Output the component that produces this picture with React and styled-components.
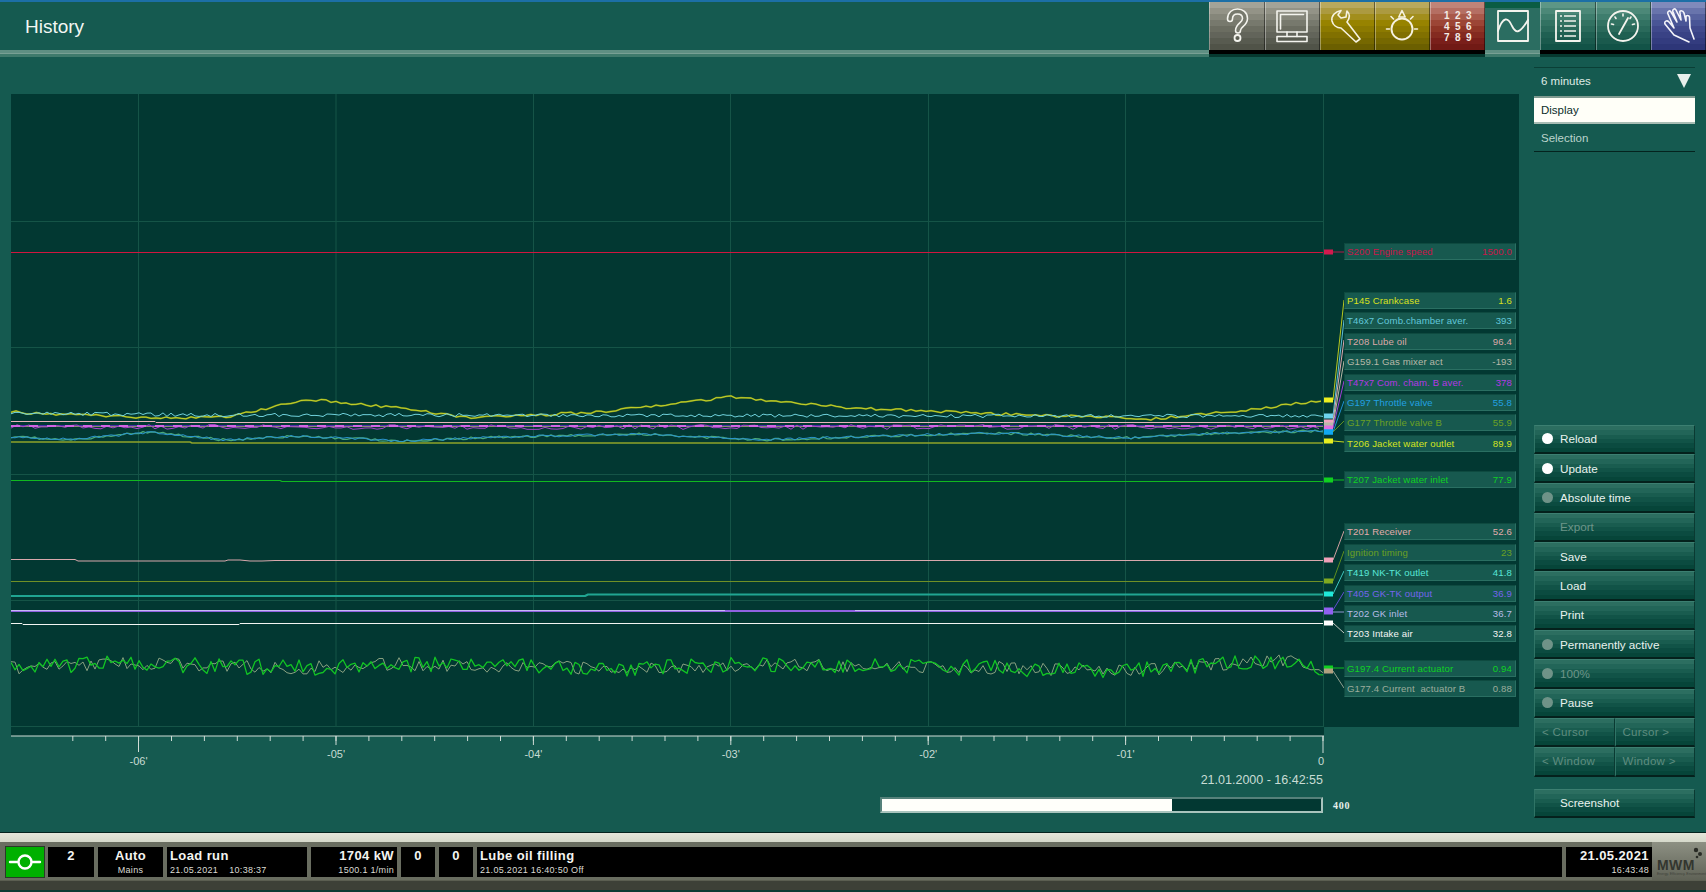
import React from "react";
import styled, { createGlobalStyle, css } from "styled-components";

const Global = createGlobalStyle`
  html, body { margin: 0; padding: 0; background: #155a50; overflow: hidden; }
  body { font-family: "Liberation Sans", Arial, sans-serif; }
`;

const bands = (cols) => {
  const n = cols.length;
  return `linear-gradient(to bottom, ${cols
    .map((c, i) => `${c} ${(i * 100) / n}% ${((i + 1) * 100) / n}%`)
    .join(", ")})`;
};

const tones = {
  gray: ["#a3a398", "#939387", "#85867a", "#77796d", "#6b6d61", "#62645a", "#585b50", "#505348"],
  yellow: ["#b9a95d", "#ac9a40", "#a28e1c", "#978300", "#8c7a00", "#817000", "#766800", "#6b5f00"],
  red: ["#c08478", "#b56f63", "#a8594a", "#9c4535", "#8f3526", "#842a20", "#7a1f1a", "#711a15"],
  teal: ["#5d9686", "#4c8878", "#3e7d6d", "#327262", "#2a6a5b", "#1f6052", "#1a5a4d", "#125347"],
  blue: ["#7f8abb", "#6874ac", "#56629f", "#495596", "#40498c", "#394285", "#333c7f", "#2d3678"],
  active: ["#0a5c43", "#2b6d61", "#2b6d61", "#2b6d61", "#2b6d61", "#2b6d61", "#2b6d61", "#2b6d61"],
};

const Page = styled.div`
  width: 1706px;
  height: 892px;
  display: flex;
  flex-direction: column;
  background: #155a50;
  overflow: hidden;
`;

const Header = styled.header`
  height: 57px;
  flex: none;
  display: flex;
  border-top: 2px solid #1c6fa6;
  box-sizing: border-box;
`;

const TitleArea = styled.div`
  flex: 1;
  display: flex;
  flex-direction: column;
`;

const Title = styled.h1`
  flex: 1;
  margin: 0;
  padding: 14px 0 0 25px;
  font-size: 19px;
  line-height: 22px;
  font-weight: 400;
  color: #f2f7f3;
`;

const Rule = styled.div`
  height: 7px;
  flex: none;
  background: linear-gradient(to bottom, #5f8f83 0 40%, #78a094 40% 50%, #3f7a6c 50% 100%);
`;

const Tabs = styled.nav`
  display: flex;
  flex: none;
`;

const Tab = styled.div`
  width: 55.2px;
  display: flex;
  flex-direction: column;
`;

const Face = styled.div`
  height: 48px;
  flex: none;
  box-sizing: border-box;
  display: flex;
  align-items: center;
  justify-content: center;
  border-left: ${(p) => (p.$tone === "active" ? "0" : "1px solid rgba(255, 255, 255, 0.35)")};
  border-right: ${(p) => (p.$tone === "active" ? "0" : "1px solid rgba(0, 0, 0, 0.45)")};
  background: ${(p) => bands(tones[p.$tone])};
`;

const Shadow = styled.div`
  flex: 1;
  background: ${(p) =>
    p.$active
      ? "linear-gradient(to bottom, #5f8f83 0 40%, #78a094 40% 50%, #3f7a6c 50% 100%)"
      : "linear-gradient(to bottom, #000 0 55%, #06382f 55% 100%)"};
`;

const Keypad = styled.div`
  display: grid;
  grid-template-columns: repeat(3, 11px);
  grid-auto-rows: 11px;
  place-items: center;
  font-size: 10px;
  font-weight: 700;
  color: #f3ece6;
`;

const Main = styled.main`
  flex: 1;
  min-height: 0;
  display: flex;
`;

const Workspace = styled.section`
  width: 1519px;
  flex: none;
  box-sizing: border-box;
  padding: 37px 0 0 11px;
  display: flex;
  flex-direction: column;
`;

const Chart = styled.div`
  height: 633px;
  flex: none;
  display: flex;
  background: #023832;
`;

const Plot = styled.svg`
  width: 1333px;
  height: 633px;
  display: block;
  flex: none;
`;

const Legend = styled.div`
  width: 172px;
  flex: none;
  padding-top: 149px;
  display: flex;
  flex-direction: column;
`;

const LegendGroup = styled.div`
  display: flex;
  flex-direction: column;
  gap: 3.4px;
  margin-bottom: ${(p) => p.$after}px;
`;

const LegendRow = styled.div`
  height: 17px;
  box-sizing: border-box;
  display: flex;
  justify-content: space-between;
  align-items: center;
  padding: 0 3px 0 2px;
  background: #17594f;
  border: 1px solid #2a6f62;
  border-top-color: #0e4a40;
  border-left-color: #0e4a40;
  font-size: 9.6px;
  letter-spacing: 0.12px;
  white-space: pre;
  color: ${(p) => p.$color};
`;

const AxisSvg = styled.svg`
  width: 1340px;
  height: 43px;
  display: block;
  flex: none;
`;

const Stamp = styled.div`
  width: 1312px;
  margin-top: 3px;
  text-align: right;
  font-size: 12.5px;
  line-height: 15px;
  color: #c8dcd4;
`;

const ProgressRow = styled.div`
  display: flex;
  align-items: center;
  margin: 9px 0 0 869px;
`;

const Progress = styled.div`
  width: 443px;
  height: 16px;
  box-sizing: border-box;
  background: #023832;
  border: 2px solid #55817a;
  border-bottom-color: #a9c4bd;
  border-right-color: #a9c4bd;
  display: flex;
`;

const ProgressFill = styled.div`
  height: 100%;
  background: #fffffa;
`;

const ProgressValue = styled.span`
  margin-left: 10px;
  font-family: "Liberation Serif", serif;
  font-size: 10px;
  font-weight: 700;
  letter-spacing: 0.8px;
  color: #e8f0ec;
`;

const Side = styled.aside`
  width: 161px;
  flex: none;
  margin-left: 15px;
  padding-top: 10px;
  display: flex;
  flex-direction: column;
`;

const MenuRow = styled.div`
  height: 28px;
  box-sizing: border-box;
  display: flex;
  align-items: center;
  justify-content: space-between;
  padding: 0 4px 0 7px;
  font-size: 11.5px;
  ${(p) =>
    p.$kind === "select" &&
    css`
      height: 29px;
      border-top: 1px solid #0a3f36;
      padding-bottom: 2px;
      color: #dfeae5;
    `}
  ${(p) =>
    p.$kind === "on" &&
    css`
      background: #fffff8;
      border-top: 2px solid #7f9a90;
      border-bottom: 2px solid #a8bdb4;
      color: #0b2d2a;
    `}
  ${(p) =>
    p.$kind === "off" &&
    css`
      border-bottom: 1px solid #04231e;
      color: #bcd4cc;
    `}
`;

const Caret = styled.span`
  width: 0;
  height: 0;
  border-left: 7px solid transparent;
  border-right: 7px solid transparent;
  border-top: 14px solid #e8f0ec;
`;

const Actions = styled.div`
  margin-top: 272.5px;
  display: flex;
  flex-direction: column;
`;

const buttonFace = css`
  height: 29.35px;
  box-sizing: border-box;
  background: ${bands(["#2c6e60", "#226558", "#195c4f", "#115347", "#0b4b40", "#064539"])};
  border-top: 1px solid #3c7f71;
  border-left: 1px solid #2f7466;
  border-bottom: 2px solid #04211c;
  border-right: 1px solid #0a3a32;
`;

const Action = styled.div`
  ${buttonFace}
  display: flex;
  align-items: center;
  font-size: 11.7px;
  padding-left: 7px;
  color: ${(p) => (p.$dim ? "#6d9589" : "#e8f2ee")};
  margin-top: ${(p) => p.$gap || 0}px;
`;

const Dot = styled.span`
  width: 11px;
  height: 11px;
  border-radius: 50%;
  flex: none;
  margin-right: 7px;
  background: ${(p) => (p.$on ? "#ffffff" : p.$none ? "transparent" : "#6f9388")};
`;

const Pair = styled.div`
  display: grid;
  grid-template-columns: 1fr 1fr;
`;

const PairButton = styled.div`
  ${buttonFace}
  display: flex;
  align-items: center;
  padding-left: 7px;
  font-size: 11.5px;
  letter-spacing: 0.3px;
  color: #5f8d80;
`;

const Footer = styled.footer`
  height: 60px;
  flex: none;
  display: flex;
  flex-direction: column;
  background: linear-gradient(to bottom, #5b5e51 0 82%, #3d4037 82% 97%, #0b3b34 97% 100%);
`;

const FootEdge = styled.div`
  height: 1px;
  background: #04231e;
`;

const Light = styled.div`
  height: 9px;
  background: linear-gradient(to bottom, #e4e6da, #d5d8ca);
`;

const StatusBar = styled.div`
  height: 38px;
  box-sizing: border-box;
  display: flex;
  padding: 5px 0 3px 6px;
  gap: 4px;
  background: #696d60;
`;

const Cell = styled.div`
  width: ${(p) => (p.$w ? `${p.$w}px` : "auto")};
  flex: ${(p) => (p.$w ? "none" : 1)};
  box-sizing: border-box;
  background: #000;
  color: #f4f4f0;
  padding: 1px 3px;
  display: flex;
  flex-direction: column;
  justify-content: space-between;
  align-items: ${(p) => p.$align || "flex-start"};
  overflow: hidden;
`;

const Big = styled.span`
  font-size: 13px;
  line-height: 15px;
  font-weight: 700;
  letter-spacing: 0.4px;
  white-space: pre;
`;

const Small = styled.span`
  font-size: 9px;
  line-height: 11px;
  letter-spacing: 0.3px;
  color: #dcdcd4;
  white-space: pre;
`;

const Signal = styled.div`
  width: 38px;
  height: 30px;
  flex: none;
  background: #00b000;
  outline: 1px solid #2a3a28;
  display: flex;
  align-items: center;
  justify-content: center;
`;

const Logo = styled.div`
  width: 54px;
  flex: none;
  margin: -5px 0 -3px -4px;
  padding-left: 5px;
  box-sizing: border-box;
  background: linear-gradient(to bottom, #8d9083, #5f6256);
  display: flex;
  flex-direction: column;
  justify-content: flex-end;
  position: relative;
  padding-bottom: 4px;
`;

const LogoText = styled.span`
  font-size: 14px;
  line-height: 13px;
  font-weight: 700;
  letter-spacing: 0.4px;
  color: #33362f;
`;

const LogoTag = styled.span`
  font-size: 3.5px;
  line-height: 4px;
  color: #3e413a;
  white-space: nowrap;
`;

const LogoDots = styled.svg`
  position: absolute;
  right: 3px;
  top: 5px;
`;

/* ---------- data ---------- */
const rng = (seed) => () => {
  seed |= 0;
  seed = (seed + 0x6d2b79f5) | 0;
  let t = Math.imul(seed ^ (seed >>> 15), 1 | seed);
  t = (t + Math.imul(t ^ (t >>> 7), 61 | t)) ^ t;
  return ((t ^ (t >>> 14)) >>> 0) / 4294967296;
};

const X0 = 11;
const X1 = 1323;

const interp = (keys, x) => {
  for (let i = 1; i < keys.length; i++) {
    if (x <= keys[i][0]) {
      const [a, b] = [keys[i - 1], keys[i]];
      return a[1] + ((b[1] - a[1]) * (x - a[0])) / (b[0] - a[0] || 1);
    }
  }
  return keys[keys.length - 1][1];
};

const trace = (keys, noise, seed, step = 4) => {
  const r = rng(seed);
  const pts = [];
  for (let x = X0; x <= X1; x += step) {
    const y = interp(keys, x) + (r() - 0.5) * 2 * noise;
    pts.push(`${x},${y.toFixed(1)}`);
  }
  return pts.join(" ");
};

const pwave = [[11, 437], [70, 439.5], [120, 435], [150, 432], [225, 440], [300, 436], [400, 441], [500, 437], [640, 434], [760, 440], [880, 436], [1000, 433], [1130, 438], [1220, 433], [1323, 431]];
const greenBase = [[11, 668], [120, 663], [300, 668], [400, 664], [640, 669], [760, 664], [1000, 668], [1120, 671], [1290, 660], [1323, 668]];
const crank = [[11, 412], [150, 418], [230, 417], [305, 399], [400, 408], [470, 418], [600, 412], [730, 397], [850, 408], [1000, 414], [1153, 419], [1250, 410], [1323, 400]];

const SERIES = [
  { pts: trace(crank, 1.3, 1, 5), color: "#6f8a20", w: 1.8 },
  { pts: trace(crank, 1.3, 1, 5), color: "#cdd82a", w: 0.9 },
  { pts: trace([[11, 413], [200, 415], [420, 415], [900, 416], [1323, 416]], 1.7, 2), color: "#70d2dc", w: 1 },
  { pts: "11,421.5 155,421.5 156,422.5 1323,422.5", color: "#e8b4bc", w: 1 },
  { pts: "11,426 1323,426", color: "#8a8a78", w: 2 },
  { pts: "11,425.5 1323,425.5", color: "#4a2ea8", w: 1 },
  { pts: trace([[11, 427], [1323, 427]], 2.4, 3, 6), color: "#a844c8", w: 1 },
  { pts: "11,426 1323,426", color: "#d264e4", w: 2, dash: "9 9" },
  { pts: trace(pwave, 1.2, 4), color: "#4aa878", w: 1.3 },
  { pts: trace(pwave, 1.2, 5), color: "#2a94cc", w: 1 },
  { pts: "11,442 190,442 192,443 1323,443", color: "#8ea32a", w: 1.6 },
  { pts: "11,480.5 280,480.5 282,481.5 1323,481.5", color: "#10b820", w: 1.2 },
  { pts: "11,559.5 75,559.5 78,561 225,561 228,560 240,560 250,561 262,561 275,560.5 1323,560.5", color: "#d8a8ac", w: 1 },
  { pts: "11,581.5 1323,581.5", color: "#6f9026", w: 1.2 },
  { pts: "11,596 585,596 588,594.5 1323,594.5", color: "#20a592", w: 2 },
  { pts: "11,611 1323,611", color: "#8f62e0", w: 2 },
  { pts: "11,610.5 725,610.5", color: "#c6b8f4", w: 1 },
  { pts: "855,610.5 1323,610.5", color: "#c6b8f4", w: 1 },
  { pts: "11,623.5 22,623.5 23,624.5 239,624.5 240,623.5 1323,623.5", color: "#f2f5f2", w: 1 },
  { pts: trace(greenBase, 6.5, 7, 4), color: "#88a080", w: 1 },
  { pts: trace(greenBase, 8, 8, 4), color: "#12c424", w: 1.3 },
  { pts: "11,252.5 1323,252.5", color: "#d0163f", w: 1 },
];

const MARKERS = [
  { y: 252, to: 252, c: "#d21a4e", lead: "#b01a48" },
  { y: 400, to: 300, c: "#eef020", lead: "#b8c820" },
  { y: 416, to: 320, c: "#6ed4ee", lead: "#5ec0d8" },
  { y: 422, to: 340, c: "#f0a4c0", lead: "#e0a8b0" },
  { y: 425, to: 361, c: "#b8b8a8", lead: "#b8b8a8" },
  { y: 428, to: 381, c: "#e070e0", lead: "#a040d8" },
  { y: 432, to: 401, c: "#10a8f0", lead: "#2090d0" },
  { y: 432, to: 421, c: "#10a8f0", lead: "#5f9020" },
  { y: 441, to: 442, c: "#e6ee20", lead: "#c8d820" },
  { y: 480, to: 480, c: "#10d020", lead: "#10c020" },
  { y: 560, to: 531, c: "#f0a0b8", lead: "#d0a0a0" },
  { y: 581, to: 551, c: "#80a820", lead: "#609020" },
  { y: 594, to: 571, c: "#20e8d8", lead: "#40c8c0" },
  { y: 610, to: 592, c: "#9060f0", lead: "#6050d0" },
  { y: 612, to: 612, c: "#9060f0", lead: "#9098d0" },
  { y: 623, to: 633, c: "#ffffff", lead: "#c0c8c0" },
  { y: 668, to: 668, c: "#10d020", lead: "#10c020" },
  { y: 671, to: 688, c: "#b0a080", lead: "#90a090" },
];

const LEGEND = [
  { after: 32, rows: [["S200 Engine speed", "1500.0", "#c8164a"]] },
  {
    after: 19,
    rows: [
      ["P145 Crankcase", "1.6", "#d8e020"],
      ["T46x7 Comb.chamber aver.", "393", "#62c8da"],
      ["T208 Lube oil", "96.4", "#dca8a8"],
      ["G159.1 Gas mixer act", "-193", "#b8b8a8"],
      ["T47x7 Com. cham. B aver.", "378", "#b438e4"],
      ["G197 Throttle valve", "55.8", "#22a0e2"],
      ["G177 Throttle valve B", "55.9", "#6ca024"],
      ["T206 Jacket water outlet", "89.9", "#d4e420"],
    ],
  },
  { after: 35.7, rows: [["T207 Jacket water inlet", "77.9", "#10d024"]] },
  {
    after: 17.3,
    rows: [
      ["T201 Receiver", "52.6", "#e4acac"],
      ["Ignition timing", "23", "#6ca024"],
      ["T419 NK-TK outlet", "41.8", "#58e8d8"],
      ["T405 GK-TK output", "36.9", "#7664ec"],
      ["T202 GK inlet", "36.7", "#b8bce8"],
      ["T203 Intake air", "32.8", "#f4f4f4"],
    ],
  },
  {
    after: 0,
    rows: [
      ["G197.4 Current actuator", "0.94", "#10d024"],
      ["G177.4 Current  actuator B", "0.88", "#9cac9c"],
    ],
  },
];

const VGRID = [138.5, 336, 533.5, 730.5, 928.5, 1125.5, 1323.5];
const HGRID = [221.5, 347.5, 474.5, 600.5, 726.5];
const MINOR = Array.from({ length: 39 }, (_, i) => 1323 - i * 32.9).filter((x) => x > 12);
const AXIS = [["-06'", 138.5], ["-05'", 336], ["-04'", 533.4], ["-03'", 730.8], ["-02'", 928.2], ["-01'", 1125.6]];

/* ---------- icons ---------- */
const Ico = ({ children, stroke = "#f4f4ee" }) => (
  <svg width="36" height="36" viewBox="0 0 36 36" fill="none" stroke={stroke} strokeWidth="1.6" strokeLinecap="round" strokeLinejoin="round">
    {children}
  </svg>
);

const HelpIcon = () => (
  <Ico>
    <path d="M11 11c0-5 3.5-7.5 7.5-7.5S26 6 26 10.5c0 6-7 6.5-7 12" strokeWidth="6.5" />
    <path d="M11 11c0-5 3.5-7.5 7.5-7.5S26 6 26 10.5c0 6-7 6.5-7 12" stroke="#77796d" strokeWidth="3.4" />
    <circle cx="18.5" cy="30" r="3" strokeWidth="1.8" />
  </Ico>
);

const ScreenIcon = () => (
  <Ico>
    <rect x="3" y="3" width="30" height="21" />
    <path d="M6.5 21V6.5h23" />
    <path d="M13 24v4.5M23 24v4.5" />
    <rect x="3" y="28.5" width="30" height="5" />
  </Ico>
);

const WrenchIcon = () => (
  <Ico stroke="#f6f2e0">
    <path d="M12 2.5C6 3.5 2 8 3 13c1 4 4.5 7 9 7l15 14 4-3-13-17c3-4 3-8 0-11l-1 6-5 1-3-3z" />
  </Ico>
);

const BulbIcon = () => (
  <Ico stroke="#f6f2e0">
    <circle cx="18" cy="21" r="10.5" strokeWidth="1.9" />
    <path d="M18 2.5l-3.2 6.5h6.4zM7 8.5l2.5 2.5M29 8.5l-2.5 2.5M2.5 21h3M30.5 21h3" />
  </Ico>
);

const TrendIcon = () => (
  <Ico>
    <rect x="3" y="3" width="30" height="30" strokeWidth="1.8" />
    <path d="M3 23C8 8 13 9 17 18c3.5 7 7 9 16-6" strokeWidth="1.8" />
  </Ico>
);

const ListIcon = () => (
  <Ico>
    <rect x="6" y="3" width="24" height="30" strokeWidth="1.8" />
    <path d="M10 8h2M14 8h12M10 13h2M14 13h12M10 18h2M14 18h12M10 23h2M14 23h12M10 28h2M14 28h12" strokeLinecap="butt" />
  </Ico>
);

const GaugeIcon = () => (
  <Ico>
    <circle cx="18" cy="18" r="15" strokeWidth="1.8" />
    <path d="M14 26l9-16" strokeWidth="1.8" />
    <path d="M18 6v2M10 9l1 1.5M6.5 16l2 .5M26 9l-1 1.5M29.5 16l-2 .5" />
  </Ico>
);

const HandIcon = () => (
  <Ico stroke="#f4f4fa">
    <path d="M29 34L14 27 5 16c-1-3 2-4 4-2l5 6L8 6c-1-3 2-4 3-2l6 10-4-10c-1-3 2-4 3-2l5 10-1-7c-1-3 3-3 4 0l2 8V9c0-2 3-2 3.5 0L30 20l4 11" />
  </Ico>
);

const SignalIcon = () => (
  <svg width="34" height="20" viewBox="0 0 34 20" fill="none" stroke="#fff" strokeWidth="2.4">
    <path d="M2 10h8M24 10h8" strokeLinecap="round" />
    <circle cx="17" cy="10" r="6.5" />
  </svg>
);

/* ---------- page ---------- */
const ACTIONS = [
  ["Reload", "on"],
  ["Update", "on"],
  ["Absolute time", "off"],
  ["Export", "none", true],
  ["Save", "none"],
  ["Load", "none"],
  ["Print", "none"],
  ["Permanently active", "off"],
  ["100%", "off", true],
  ["Pause", "off"],
];

export default function App() {
  return (
    <Page>
      <Global />
      <Header>
        <TitleArea>
          <Title>History</Title>
          <Rule />
        </TitleArea>
        <Tabs>
          <Tab><Face $tone="gray"><HelpIcon /></Face><Shadow /></Tab>
          <Tab><Face $tone="gray"><ScreenIcon /></Face><Shadow /></Tab>
          <Tab><Face $tone="yellow"><WrenchIcon /></Face><Shadow /></Tab>
          <Tab><Face $tone="yellow"><BulbIcon /></Face><Shadow /></Tab>
          <Tab>
            <Face $tone="red">
              <Keypad>
                {[1, 2, 3, 4, 5, 6, 7, 8, 9].map((n) => <span key={n}>{n}</span>)}
              </Keypad>
            </Face>
            <Shadow />
          </Tab>
          <Tab><Face $tone="active"><TrendIcon /></Face><Shadow $active /></Tab>
          <Tab><Face $tone="teal"><ListIcon /></Face><Shadow /></Tab>
          <Tab><Face $tone="teal"><GaugeIcon /></Face><Shadow /></Tab>
          <Tab><Face $tone="blue"><HandIcon /></Face><Shadow /></Tab>
        </Tabs>
      </Header>

      <Main>
        <Workspace>
          <Chart>
            <Plot viewBox="11 94 1333 633">
              {HGRID.map((y) => <line key={y} x1="11" x2="1323" y1={y} y2={y} stroke="#155447" />)}
              {VGRID.map((x) => <line key={x} x1={x} x2={x} y1="94" y2="727" stroke="#155447" />)}
              {SERIES.map((s, i) => (
                <polyline key={i} points={s.pts} fill="none" stroke={s.color} strokeWidth={s.w} strokeDasharray={s.dash} strokeLinejoin="round" />
              ))}
              {MARKERS.map((m, i) => (
                <g key={i}>
                  <polyline points={`1333,${m.y} 1344,${m.to}`} fill="none" stroke={m.lead} strokeWidth="1" />
                  <rect x="1324" y={m.y - 2.5} width="9" height="5" fill={m.c} />
                </g>
              ))}
            </Plot>
            <Legend>
              {LEGEND.map((g, i) => (
                <LegendGroup key={i} $after={g.after}>
                  {g.rows.map(([name, value, color]) => (
                    <LegendRow key={name} $color={color}>
                      <span>{name}</span>
                      <span>{value}</span>
                    </LegendRow>
                  ))}
                </LegendGroup>
              ))}
            </Legend>
          </Chart>
          <AxisSvg viewBox="11 727 1340 43">
            <rect x="11" y="727" width="1313" height="9" fill="#023832" />
            <line x1="11" x2="1324" y1="736" y2="736" stroke="#cfdcd6" strokeWidth="1" />
            {MINOR.map((x) => <line key={x} x1={x} x2={x} y1="736" y2="741" stroke="#cfdcd6" strokeWidth="1" />)}
            {AXIS.map(([t, x]) => (
              <g key={t}>
                <line x1={x} x2={x} y1="736" y2={x < 200 ? 752 : 745} stroke="#cfdcd6" strokeWidth="1" />
                <text x={x} y={x < 200 ? 765 : 758} textAnchor="middle" fontSize="11" fontFamily="Liberation Sans" fill="#c8dcd4">{t}</text>
              </g>
            ))}
            <line x1="1323" x2="1323" y1="736" y2="753" stroke="#cfdcd6" strokeWidth="1" />
            <text x="1324" y="765" textAnchor="end" fontSize="11" fontFamily="Liberation Sans" fill="#c8dcd4">0</text>
          </AxisSvg>
          <Stamp>21.01.2000 - 16:42:55</Stamp>
          <ProgressRow>
            <Progress><ProgressFill style={{ width: `${(290 / 439) * 100}%` }} /></Progress>
            <ProgressValue>400</ProgressValue>
          </ProgressRow>
        </Workspace>

        <Side>
          <MenuRow $kind="select">6 minutes<Caret /></MenuRow>
          <MenuRow $kind="on">Display</MenuRow>
          <MenuRow $kind="off">Selection</MenuRow>
          <Actions>
            {ACTIONS.map(([label, state, dim]) => (
              <Action key={label} $dim={dim}>
                <Dot $on={state === "on"} $none={state === "none"} />
                {label}
              </Action>
            ))}
            <Pair>
              <PairButton>&lt; Cursor</PairButton>
              <PairButton>Cursor &gt;</PairButton>
            </Pair>
            <Pair>
              <PairButton>&lt; Window</PairButton>
              <PairButton>Window &gt;</PairButton>
            </Pair>
            <Action $gap={12}>
              <Dot $none />
              Screenshot
            </Action>
          </Actions>
        </Side>
      </Main>

      <Footer>
        <FootEdge />
        <Light />
        <StatusBar>
          <Signal><SignalIcon /></Signal>
          <Cell $w={46} $align="center"><Big>2</Big></Cell>
          <Cell $w={65} $align="center"><Big>Auto</Big><Small>Mains</Small></Cell>
          <Cell $w={140}><Big>Load run</Big><Small>21.05.2021    10:38:37</Small></Cell>
          <Cell $w={86} $align="flex-end"><Big>1704 kW</Big><Small>1500.1 1/min</Small></Cell>
          <Cell $w={34} $align="center"><Big>0</Big></Cell>
          <Cell $w={34} $align="center"><Big>0</Big></Cell>
          <Cell><Big>Lube oil filling</Big><Small>21.05.2021 16:40:50 Off</Small></Cell>
          <Cell $w={86} $align="flex-end"><Big>21.05.2021</Big><Small>16:43:48</Small></Cell>
          <Logo>
            <LogoDots width="10" height="12" viewBox="0 0 10 12" fill="#2a2c26">
              <circle cx="3" cy="3" r="2.2" /><circle cx="7" cy="7" r="2" /><circle cx="4" cy="10" r="1.3" />
            </LogoDots>
            <LogoText>MWM</LogoText>
            <LogoTag>Energy. Efficiency. Environment.</LogoTag>
          </Logo>
        </StatusBar>
      </Footer>
    </Page>
  );
}
